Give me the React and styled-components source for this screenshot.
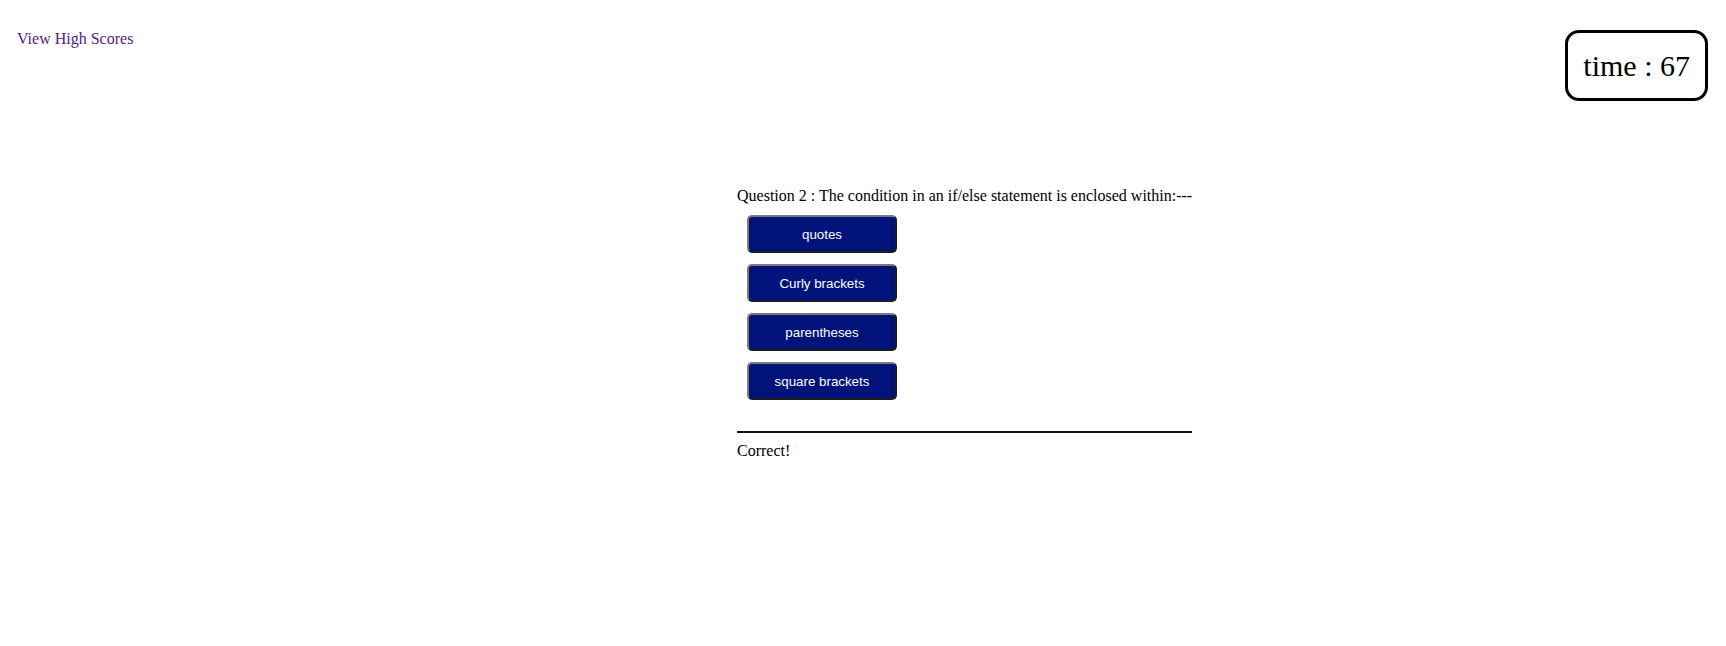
import React from 'react'
import { styled, createGlobalStyle } from 'styled-components'

const GlobalStyle = createGlobalStyle`
  body {
    margin: 0;
    font-family: "Liberation Serif", "Times New Roman", serif;
    font-size: 16px;
    color: #000;
    background: #fff;
  }
`

const Header = styled.header`
  display: flex;
  justify-content: space-between;
  align-items: flex-start;
  padding: 30px 18px 0 17px;
`

const ScoresLink = styled.a`
  color: #551a8b;
  text-decoration: none;
  cursor: pointer;
`

const Timer = styled.div`
  height: 71px;
  box-sizing: border-box;
  display: flex;
  align-items: center;
  padding: 0 15px;
  border: 3px solid #000;
  border-radius: 14px;
  font-size: 30px;
`

const Quiz = styled.main`
  margin: 86px 0 0 737px;
  width: fit-content;
`

const Question = styled.p`
  margin: 0;
`

const Choices = styled.div`
  display: flex;
  flex-direction: column;
  align-items: flex-start;
  gap: 11px;
  margin-top: 10px;
  padding-left: 10px;
`

const Choice = styled.button`
  width: 150px;
  height: 38px;
  background: #00137b;
  color: #fff;
  font-family: "Liberation Sans", Arial, sans-serif;
  font-size: 13.33px;
  border: 2px solid;
  border-color: #7a7a7a #1c1c1c #1c1c1c #7a7a7a;
  border-radius: 5px;
  cursor: pointer;
`

const Divider = styled.hr`
  margin: 31px 0 0;
  border: none;
  border-top: 2px solid #111;
`

const Result = styled.p`
  margin: 9px 0 0;
`

const choices = ['quotes', 'Curly brackets', 'parentheses', 'square brackets']

const App = () => {
  return (
    <>
      <GlobalStyle />
      <Header>
        <ScoresLink href="#">View High Scores</ScoresLink>
        <Timer>time : 67</Timer>
      </Header>
      <Quiz>
        <Question>Question 2 : The condition in an if/else statement is enclosed within:---</Question>
        <Choices>
          {choices.map((c) => (
            <Choice key={c}>{c}</Choice>
          ))}
        </Choices>
        <Divider />
        <Result>Correct!</Result>
      </Quiz>
    </>
  )
}

export default App
